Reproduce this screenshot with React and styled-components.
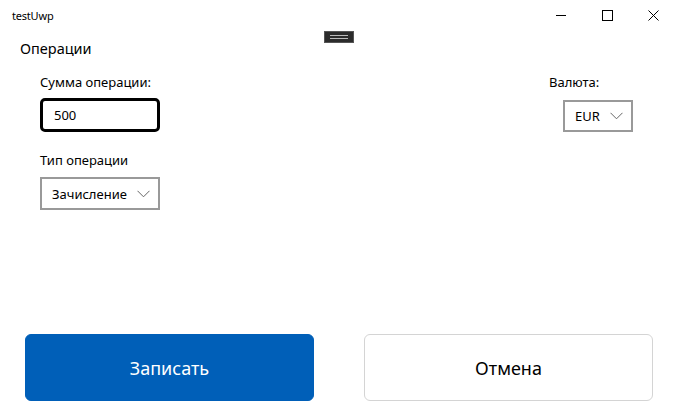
import React from "react";
import styled, { createGlobalStyle } from "styled-components";

const Global = createGlobalStyle`
  html, body { margin: 0; padding: 0; background: #fff; }
  body { font-family: "Noto Sans", "Open Sans", sans-serif; color: #000; }
  #root { height: 100vh; }
`;

const Window = styled.div`
  position: relative;
  height: 100vh;
  display: flex;
  flex-direction: column;
  background: #fff;
  overflow: hidden;
`;

const TitleBar = styled.div`
  height: 30px;
  display: flex;
  align-items: center;
  justify-content: space-between;
  padding-left: 12px;
  flex-shrink: 0;
`;

const Title = styled.span`
  font-size: 11px;
  letter-spacing: -0.2px;
`;

const Controls = styled.div`
  display: flex;
  align-items: center;
  height: 100%;
`;

const Ctrl = styled.div`
  width: 46px;
  height: 30px;
  display: flex;
  align-items: center;
  justify-content: center;
`;

const DebugBar = styled.div`
  position: absolute;
  left: 324px;
  top: 31px;
  width: 30px;
  height: 12px;
  background: #2b2b2b;
  border: 1px solid #555;
  box-sizing: border-box;
  display: flex;
  flex-direction: column;
  justify-content: center;
  align-items: center;
  gap: 2px;
`;

const DebugLine = styled.div`
  width: 18px;
  height: 1px;
  background: #bbb;
`;

const Header = styled.div`
  font-size: 14.5px;
  line-height: 20px;
  padding: 8px 0 0 20px;
`;

const Form = styled.div`
  display: flex;
  justify-content: space-between;
  padding: 14px 43px 0 40px;
`;

const Column = styled.div`
  display: flex;
  flex-direction: column;
  align-items: flex-start;
`;

const Label = styled.div`
  font-size: 13px;
  line-height: 20px;
  margin-top: ${(p) => p.$mt || 0}px;
`;

const TextBox = styled.div`
  margin-top: 6px;
  box-sizing: border-box;
  width: 120px;
  height: 34px;
  border: 3px solid #000;
  border-radius: 5px;
  display: flex;
  align-items: center;
  padding-left: 11px;
  font-size: 13px;
`;

const Combo = styled.div`
  margin-top: ${(p) => p.$mt}px;
  margin-left: ${(p) => p.$ml || 0}px;
  box-sizing: border-box;
  width: ${(p) => p.$w}px;
  height: ${(p) => p.$h}px;
  border: 2px solid #999;
  display: flex;
  align-items: center;
  justify-content: space-between;
  padding: 0 8px 0 10px;
  font-size: 13px;
`;

const Spacer = styled.div`
  flex: 1;
`;

const ButtonRow = styled.div`
  display: flex;
  gap: 50px;
  padding: 0 23px 10px 25px;
`;

const Button = styled.div`
  flex: 1;
  height: 67px;
  box-sizing: border-box;
  border-radius: 6px;
  display: flex;
  align-items: center;
  justify-content: center;
  font-size: 18px;
  background: ${(p) => (p.$primary ? "#005FB8" : "#fff")};
  color: ${(p) => (p.$primary ? "#fff" : "#000")};
  border: 1px solid ${(p) => (p.$primary ? "#005FB8" : "#d4d4d4")};
`;

const Chevron = () => (
  <svg width="13" height="8" viewBox="0 0 13 8">
    <path d="M0.5 0.8 L6.5 6.8 L12.5 0.8" fill="none" stroke="#666" strokeWidth="1" />
  </svg>
);

export default function App() {
  return (
    <>
      <Global />
      <Window>
        <TitleBar>
          <Title>testUwp</Title>
          <Controls>
            <Ctrl>
              <svg width="10" height="10" viewBox="0 0 10 10">
                <path d="M0 5.5 H10" stroke="#000" strokeWidth="1" />
              </svg>
            </Ctrl>
            <Ctrl>
              <svg width="11" height="11" viewBox="0 0 11 11">
                <rect x="0.5" y="0.5" width="10" height="10" fill="none" stroke="#000" strokeWidth="1" />
              </svg>
            </Ctrl>
            <Ctrl>
              <svg width="11" height="11" viewBox="0 0 11 11">
                <path d="M0.5 0.5 L10.5 10.5 M10.5 0.5 L0.5 10.5" stroke="#000" strokeWidth="1" />
              </svg>
            </Ctrl>
          </Controls>
        </TitleBar>
        <DebugBar>
          <DebugLine />
          <DebugLine />
        </DebugBar>
        <Header>Операции</Header>
        <Form>
          <Column>
            <Label>Сумма операции:</Label>
            <TextBox>500</TextBox>
            <Label $mt={18}>Тип операции</Label>
            <Combo $mt={7} $w={120} $h={33}>
              Зачисление <Chevron />
            </Combo>
          </Column>
          <Column>
            <Label>Валюта:</Label>
            <Combo $mt={8} $ml={14} $w={70} $h={32}>
              EUR <Chevron />
            </Combo>
          </Column>
        </Form>
        <Spacer />
        <ButtonRow>
          <Button $primary>Записать</Button>
          <Button>Отмена</Button>
        </ButtonRow>
      </Window>
    </>
  );
}
